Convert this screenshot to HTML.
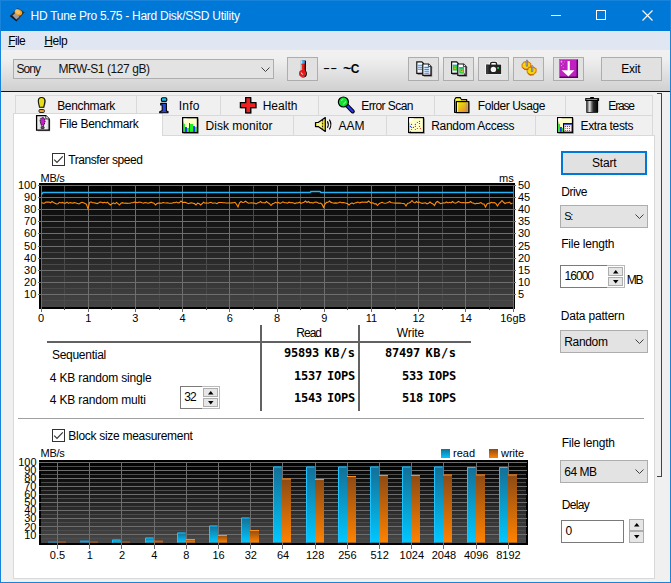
<!DOCTYPE html>
<html><head><meta charset="utf-8"><title>HD Tune Pro 5.75 - Hard Disk/SSD Utility</title>
<style>
*{box-sizing:border-box;margin:0;padding:0}
html,body{width:671px;height:583px;overflow:hidden;background:#f0f0f0}
body{position:relative;font-family:"Liberation Sans",sans-serif;font-size:12px;color:#000;line-height:1}
.a{position:absolute}
.t{position:absolute;white-space:nowrap;font-size:12px;line-height:14px;letter-spacing:-0.25px}
.ar{position:absolute;white-space:nowrap;font-size:11px;line-height:12px;font-family:"Liberation Sans",sans-serif}
.mono{position:absolute;white-space:nowrap;font-family:"DejaVu Sans Mono","Liberation Mono",monospace;font-weight:bold;font-size:12px;line-height:14px;letter-spacing:-0.22px}
.btn{position:absolute;background:#e1e1e1;border:1px solid #adadad}
.combo{position:absolute;background:#e3e3e3;border:1px solid #adadad}
.tab{position:absolute;border:1px solid #d9d9d9;background:#f0f0f0}
svg{position:absolute;overflow:visible}
</style></head>
<body>
<div class="a" style="left:0;top:0;width:671px;height:31px;background:#0078d7"></div>
<div class="a" style="left:0;top:0;width:1px;height:583px;background:#1883da"></div>
<div class="a" style="left:0;top:0;width:671px;height:1px;background:#1883da"></div>
<div class="a" style="left:670px;top:0;width:1px;height:583px;background:#1883da"></div>
<div class="a" style="left:0;top:582px;width:671px;height:1px;background:#1883da"></div>
<svg style="left:9px;top:7px" width="17" height="16" viewBox="0 0 17 16">
<path d="M8.400 1.200 L15.300 5.300 L7.500 14.300 L1 8.900Z" fill="#2c2a28" stroke="#1a3a5a" stroke-width="0.500"/>
<path d="M1 8.900 L7.500 14.300 L7.500 13 L1.600 8.200Z" fill="#111"/>
<path d="M3.500 8.600 L7.300 5.200 L10.500 9.800 L7.200 12.600Z" fill="#9c9ca8"/>
<ellipse cx="9.400" cy="5.400" rx="3.900" ry="2.900" fill="#f4a428" transform="rotate(28 9.400 5.400)"/>
<ellipse cx="8.800" cy="4.800" rx="2.600" ry="1.800" fill="#fbc060" transform="rotate(28 8.800 4.800)"/>
<path d="M8.600 3.400 L9.600 6.400 L8 6.600Z" fill="#c8c0e0"/>
</svg>
<div class="t" style="left:30.50px;top:9px;font-size:12px;line-height:14px;letter-spacing:-0.272px;color:#fff">HD Tune Pro 5.75 - Hard Disk/SSD Utility</div>
<div class="a" style="left:551px;top:15px;width:10px;height:1px;background:#fff"></div>
<div class="a" style="left:596px;top:10px;width:10px;height:10px;border:1px solid #fff"></div>
<svg style="left:642px;top:10px" width="11" height="11" viewBox="0 0 11 11"><path d="M0.5 0.5 L10.5 10.5 M10.5 0.5 L0.5 10.5" stroke="#fff" stroke-width="1.1" fill="none"/></svg>
<div class="a" style="left:1px;top:31px;width:669px;height:19px;background:#e0e7f3"></div>
<div class="t" style="left:8.30px;top:34px;font-size:12px;line-height:14px;letter-spacing:-0.650px"><u>F</u>ile</div>
<div class="t" style="left:44.30px;top:34px;font-size:12px;line-height:14px;letter-spacing:-0.400px"><u>H</u>elp</div>
<div class="a" style="left:1px;top:50px;width:669px;height:41px;background:linear-gradient(#f1f1f1 0%,#efefef 22%,#d0d0d0 100%)"></div>
<div class="a" style="left:1px;top:91px;width:669px;height:1px;background:#111"></div>
<div class="combo" style="left:13px;top:59px;width:261px;height:20px"></div>
<div class="t" style="left:16.50px;top:62px;font-size:12px;line-height:14px;letter-spacing:-0.917px;color:#111">Sony</div>
<div class="t" style="left:58.50px;top:62px;font-size:12px;line-height:14px;letter-spacing:-0.436px;color:#111">MRW-S1 (127 gB)</div>
<svg style="left:260.500px;top:67px" width="9" height="6" viewBox="0 0 9 6"><path d="M0.500 0.500 L4.500 4.500 L8.500 0.500" stroke="#404040" stroke-width="1" fill="none"/></svg>
<div class="btn" style="left:287px;top:57px;width:31px;height:24px"></div>
<svg style="left:296px;top:58px" width="14" height="21" viewBox="0 0 14 21">
<circle cx="7.2" cy="15.8" r="3.7" fill="#000"/>
<rect x="8" y="2.6" width="2" height="12" fill="#000"/>
<rect x="4.300" y="2.300" width="1" height="11" fill="#b8c8cc"/>
<circle cx="5.800" cy="15.400" r="3.700" fill="#c8e8f0"/>
<rect x="5" y="2.300" width="3.700" height="12" fill="#e81818"/>
<rect x="5" y="2.300" width="3.700" height="3.400" fill="#18b0ff"/>
<rect x="5" y="2.300" width="1.300" height="3.400" fill="#b0e8ff"/>
<rect x="5" y="6.500" width="1.100" height="6" fill="#f8a848"/>
<circle cx="6.400" cy="15.500" r="3.400" fill="#e81818"/>
<path d="M5.300 14.200 q0.300 1.600 2 1.800 l-0.300 0.800 q-2 -0.400 -2.300 -2.200z" fill="#fff"/>
</svg>
<div class="a" style="left:322.500px;top:61px;font:12px/14px 'Liberation Sans',sans-serif;white-space:nowrap;transform:scaleX(1.75);transform-origin:0 0;letter-spacing:0.2px">--</div>
<div class="a" style="left:342.500px;top:62px;font:bold 12px/14px 'Liberation Sans',sans-serif;white-space:nowrap;letter-spacing:1.200px"><span style="position:relative;top:0px;display:inline-block;transform:scaleX(1.2);transform-origin:0 50%">~</span>C</div>
<div class="btn" style="left:408px;top:57px;width:31px;height:24px"></div>
<div class="btn" style="left:443px;top:57px;width:31px;height:24px"></div>
<div class="btn" style="left:478px;top:57px;width:31px;height:24px"></div>
<div class="btn" style="left:513px;top:57px;width:31px;height:24px"></div>
<div class="btn" style="left:553px;top:57px;width:31px;height:24px"></div>
<div class="btn" style="left:601px;top:57px;width:61px;height:24px"></div>
<div class="t" style="left:621.30px;top:62px;font-size:12px;line-height:14px;letter-spacing:-0.233px">Exit</div>
<svg style="left:415px;top:60px" width="19" height="18" viewBox="0 0 19 18"><defs><linearGradient id="pg" x1="0" y1="0" x2="1" y2="1"><stop offset="0.45" stop-color="#fff"/><stop offset="1" stop-color="#d8c0d8"/></linearGradient></defs>
<path d="M2.600 2.600 h5.500 l2 2 v10.400 h-7.500z" fill="#666" opacity="0.700"/>
<path d="M1.800 1.800 h5 l1.600 1.600 v10 h-6.600z" fill="url(#pg)" stroke="#111" stroke-width="1.200"/>
<path d="M3 5.300h4M3 7.300h4M3 9.200h4" stroke="#1e90ff" stroke-width="1.100"/>
<path d="M8.800 4.800 h6 l2.400 2.400 v9.600 h-8.400z" fill="#555" opacity="0.700"/>
<path d="M7.800 4 h5.800 l2.400 2.400 v9 h-8.200z" fill="url(#pg)" stroke="#111" stroke-width="1.200"/>
<path d="M13.400 4 v2.600 h2.600" fill="#fff" stroke="#111" stroke-width="0.800"/>
<path d="M9.300 7.400h4.600M9.300 9.400h4.600M9.300 11.300h4.600M9.300 13.200h4.600" stroke="#1e90ff" stroke-width="1.100"/>
</svg>
<svg style="left:450px;top:60px" width="19" height="18" viewBox="0 0 19 18">
<path d="M2.400 2.600 h5.500 l2 2 v10.400 h-7.500z" fill="#666" opacity="0.700"/>
<path d="M1.600 1.800 h5 l1.600 1.600 v10 h-6.600z" fill="url(#pg)" stroke="#111" stroke-width="1.200"/>
<rect x="2.800" y="5" width="4.200" height="5.600" fill="#20d040"/>
<rect x="2.800" y="4.600" width="4.200" height="1.200" fill="#20a0f0"/>
<rect x="4.200" y="6.600" width="1.800" height="2.400" fill="#e8d020"/>
<rect x="4.600" y="7" width="1" height="1.300" fill="#f03020"/>
<path d="M8.800 4.800 h6 l2.400 2.400 v9.600 h-8.400z" fill="#555" opacity="0.700"/>
<path d="M7.800 4 h5.800 l2.400 2.400 v9 h-8.200z" fill="url(#pg)" stroke="#111" stroke-width="1.200"/>
<path d="M13.400 4 v2.600 h2.600" fill="#fff" stroke="#111" stroke-width="0.800"/>
<rect x="9.200" y="7.400" width="4.800" height="6.200" fill="#20d040"/>
<rect x="9.200" y="7" width="4.800" height="1.300" fill="#20a0f0"/>
<rect x="10.600" y="9.200" width="2.200" height="3" fill="#e8d020"/>
<rect x="11.200" y="9.600" width="1.100" height="1.600" fill="#f03020"/>
<rect x="14" y="13.600" width="1" height="1" fill="#000"/>
</svg>
<svg style="left:485px;top:60px" width="18" height="16" viewBox="0 0 18 16">
<path d="M1.200 4.600 H5 V3.600 Q5.200 1.700 7 1.700 H10.200 Q12 1.700 12.200 3.600 V4.600 H16.200 V14.100 H1.200Z" fill="#fff" stroke="#fff" stroke-width="1.600" stroke-linejoin="round"/>
<path d="M1.200 4.600 H16.200 V14.100 H1.200Z" fill="#222"/>
<path d="M5.600 5 V3.800 Q5.700 2.500 7 2.400 H10.200 Q11.500 2.500 11.600 3.800 V5" fill="none" stroke="#222" stroke-width="1.400"/>
<rect x="1.200" y="4.600" width="2.400" height="9.500" fill="#3a3a3a"/>
<circle cx="8.400" cy="9.400" r="2.700" fill="#f4f4f4"/>
<rect x="12.200" y="7.100" width="1.800" height="1.700" fill="#20e040"/>
</svg>
<svg style="left:520px;top:59px" width="19" height="19" viewBox="0 0 19 19">
<path d="M2 5.500 L4 3 L8 2.600 L10.800 4.600 L10.600 7.600 L8.400 9.800 L4.600 10 L2.200 8.200Z" fill="#f4d808" stroke="#e07800" stroke-width="1.100" stroke-linejoin="round"/>
<path d="M7 10.800 L9 8.400 L13.200 8 L16.200 10 L16 13 L13.800 15.200 L10 15.600 L7.400 13.800Z" fill="#f4d808" stroke="#e07800" stroke-width="1.100" stroke-linejoin="round"/>
<path d="M6.200 2 L7 0.800 L7.600 2 V7.200 H6.200Z" fill="#c8c0d8" stroke="#5a5070" stroke-width="0.600"/>
<path d="M11.400 7.400 L12.100 6.200 L12.800 7.400 V12.600 H11.400Z" fill="#c8c0d8" stroke="#5a5070" stroke-width="0.600"/>
<path d="M3 9 L4.600 10.600 L8.400 10.400 M8 14.600 L10 16.200 L13.800 15.800" stroke="#b06000" stroke-width="0.900" fill="none"/>
</svg>
<svg style="left:558px;top:58px" width="21" height="21" viewBox="0 0 21 21">
<rect x="1" y="1" width="19" height="19" fill="#c020c0"/>
<path d="M19.300 1.800 V19.300 H1.800" stroke="#5a0060" stroke-width="1.500" fill="none"/>
<path d="M1.500 19.500 V1.500 H19.500" stroke="#d860d8" stroke-width="0.800" fill="none"/>
<path d="M2.500 3 l1.500 -0.500 l0.500 1.500 l-1.500 1 z M4.500 5.500 h1 v1 h-1z M3 7 h1 v1 h-1z M6 3.500 h0.800 v0.800 h-0.800z M4.800 9.300 h0.800 v0.800 h-0.800z M11.300 3.600 h0.700 v0.700 h-0.700z" fill="#c8b8c8"/>
<path d="M9.600 3 H11.800 V12.300 H16.500 L10.400 18.400 L3.600 12.300 H9.600Z" fill="#fff"/>
</svg>
<div class="a" style="left:657px;top:93px;width:5px;height:1px;background:#444"></div>
<div class="a" style="left:661px;top:93px;width:1px;height:384px;background:#444"></div>
<div class="a" style="left:657px;top:476px;width:5px;height:1px;background:#444"></div>
<div class="tab" style="left:15px;top:95px;width:122px;height:21px"></div>
<div class="t" style="left:57.20px;top:99px;font-size:12px;line-height:14px;letter-spacing:-0.319px">Benchmark</div>
<div class="tab" style="left:136px;top:95px;width:85px;height:21px"></div>
<div class="t" style="left:178.70px;top:99px;font-size:12px;line-height:14px;letter-spacing:0.267px">Info</div>
<div class="tab" style="left:220px;top:95px;width:99px;height:21px"></div>
<div class="t" style="left:262.70px;top:99px;font-size:12px;line-height:14px;letter-spacing:0.020px">Health</div>
<div class="tab" style="left:318px;top:95px;width:117px;height:21px"></div>
<div class="t" style="left:361.20px;top:99px;font-size:12px;line-height:14px;letter-spacing:-0.561px">Error Scan</div>
<div class="tab" style="left:434px;top:95px;width:132px;height:21px"></div>
<div class="t" style="left:477.70px;top:99px;font-size:12px;line-height:14px;letter-spacing:-0.386px">Folder Usage</div>
<div class="tab" style="left:565px;top:95px;width:88px;height:21px"></div>
<div class="t" style="left:608.30px;top:99px;font-size:12px;line-height:14px;letter-spacing:-1.163px">Erase</div>
<div class="tab" style="left:162px;top:115px;width:132px;height:21px"></div>
<div class="t" style="left:205.50px;top:119px;font-size:12px;line-height:14px;letter-spacing:0.027px">Disk monitor</div>
<div class="tab" style="left:293px;top:115px;width:94px;height:21px"></div>
<div class="t" style="left:338.50px;top:119px;font-size:12px;line-height:14px;letter-spacing:0.000px">AAM</div>
<div class="tab" style="left:386px;top:115px;width:150px;height:21px"></div>
<div class="t" style="left:431.20px;top:119px;font-size:12px;line-height:14px;letter-spacing:-0.283px">Random Access</div>
<div class="tab" style="left:535px;top:115px;width:118px;height:21px"></div>
<div class="t" style="left:580.50px;top:119px;font-size:12px;line-height:14px;letter-spacing:-0.370px">Extra tests</div>
<div class="a" style="left:13px;top:135px;width:642px;height:444px;background:#fff;border:1px solid #d9d9d9"></div>
<div class="a" style="left:13px;top:113px;width:150px;height:23px;background:#fff;border:1px solid #d9d9d9;border-bottom:none"></div>
<div class="t" style="left:59.30px;top:117px;font-size:12px;line-height:14px;letter-spacing:-0.300px">File Benchmark</div>

<svg style="left:34px;top:96px" width="16" height="18" viewBox="0 0 16 18">
<path d="M8.4 2 C11.6 2 12 4 12 5.6 C12 7.6 10.6 10 10.3 11.8 H6.5 C6.2 10 4.8 7.6 4.8 5.6 C4.8 4 5.2 2 8.4 2Z" fill="#444" opacity="0.5"/>
<path d="M7.600 1.500 C10.300 1.500 10.900 3.300 10.900 5.100 C10.900 7.100 9.900 9.500 9.700 11.300 H5.500 C5.300 9.500 4.300 7.100 4.300 5.100 C4.300 3.300 4.900 1.500 7.600 1.500Z" fill="#e6de12" stroke="#111" stroke-width="1.100"/>
<rect x="5" y="13.5" width="5.4" height="3" rx="1" fill="#f0a030" stroke="#111" stroke-width="0.9"/>
</svg>
<svg style="left:35px;top:114px" width="18" height="19" viewBox="0 0 18 19">
<defs><linearGradient id="fpg" x1="0" y1="0" x2="1" y2="0"><stop offset="0" stop-color="#fff"/><stop offset="0.300" stop-color="#dcdcdc"/><stop offset="0.700" stop-color="#f4f4f4"/><stop offset="1" stop-color="#d0d0d0"/></linearGradient></defs>
<path d="M2.600 2.600 H11.500 L15.200 6 V17.300 H2.600Z" fill="#555" opacity="0.550"/>
<path d="M1.600 1.600 H10.800 L14.200 4.900 V16.200 H1.600Z" fill="url(#fpg)" stroke="#000" stroke-width="1.300"/>
<path d="M10.800 1.600 V4.900 H14.200" fill="#fff" stroke="#000" stroke-width="0.800"/>
<path d="M7.600 3.700 C9.600 3.700 10.100 5.300 10.100 6.700 C10.100 8.300 9.300 9.700 9 11.200 H6.300 C6 9.700 5.200 8.300 5.200 6.700 C5.200 5.300 5.600 3.700 7.600 3.700Z" fill="#c81cd0" stroke="#111" stroke-width="1" stroke-dasharray="1.500 0.700"/>
<rect x="6.200" y="12.600" width="2.900" height="2" rx="0.500" fill="#c81cd0" stroke="#111" stroke-width="0.800"/>
</svg>
<svg style="left:159px;top:96px" width="12" height="18" viewBox="0 0 12 18">
<rect x="2.400" y="1.800" width="5.400" height="3.600" rx="1.200" fill="#00c4f4" stroke="#000" stroke-width="1.100"/>
<path d="M1.700 7.400 H7.400 V14.900 L9 15.600 V16.700 H0.700 V15.700 L3.200 14.600 V9 H1.700Z" fill="#2848e0" stroke="#000" stroke-width="1.100" stroke-linejoin="round"/>
</svg>
<svg style="left:182px;top:117px" width="18" height="18" viewBox="0 0 18 18">
<rect x="1.500" y="1.500" width="15.300" height="15.300" fill="#555" opacity="0.550"/>
<rect x="0.600" y="0.600" width="14.900" height="14.900" fill="#ffffc8" stroke="#000" stroke-width="1.200"/>
<path d="M1.200 1.200 H5.500 L1.200 5.500Z" fill="#fff"/>
<rect x="1.200" y="6.800" width="1.700" height="8.100" fill="#20f020"/><rect x="2.900" y="10.100" width="2.100" height="4.800" fill="#2030ff"/><rect x="5.000" y="11.000" width="2.000" height="3.900" fill="#20f020"/><rect x="7.000" y="6.000" width="1.000" height="8.900" fill="#2030ff"/><rect x="8.000" y="7.000" width="3.100" height="7.900" fill="#20f020"/><rect x="11.100" y="9.100" width="1.900" height="5.800" fill="#2030ff"/><rect x="13.000" y="9.900" width="1.900" height="5.000" fill="#20f020"/>
<rect x="0.600" y="0.600" width="14.900" height="14.900" fill="none" stroke="#000" stroke-width="1.200"/>
</svg>
<svg style="left:239px;top:96px" width="19" height="19" viewBox="0 0 19 19">
<path d="M7.500 2.500 H12.500 V7.500 H17.800 V12.500 H12.500 V17.800 H7.500 V12.500 H2.200 V7.500 H7.500Z" fill="#444" opacity="0.5"/>
<path d="M6.700 1.700 H11.700 V6.700 H16.900 V11.700 H11.700 V16.800 H6.700 V11.700 H1.400 V6.700 H6.700Z" fill="#f02020" stroke="#000" stroke-width="1.300"/>
</svg>
<svg style="left:336px;top:95px" width="20" height="20" viewBox="0 0 20 20">
<path d="M11 10.500 L16.800 16.500" stroke="#000" stroke-width="4" stroke-linecap="round"/>
<path d="M11 10.500 L16.600 16.300" stroke="#2838e8" stroke-width="2.200" stroke-linecap="round"/>
<circle cx="7.400" cy="7" r="5" fill="#10e030" stroke="#000" stroke-width="1.200"/>
<path d="M5.200 6 L7 4.200 M7.200 9.300 L10 6.500" stroke="#d8ffd8" stroke-width="0.800"/>
</svg>
<svg style="left:314px;top:116px" width="19" height="17" viewBox="0 0 19 17">
<path d="M1.500 6.500 H4.200 L11.300 1.600 V15.400 L4.200 10.600 H1.500Z" fill="#f0e020" stroke="#000" stroke-width="1.200" stroke-linejoin="round"/>
<path d="M3 7.300 H4.600 L7.500 5.500 V11.500 L4.600 9.800 H3Z" fill="#faf6a0"/>
<path d="M8.600 3.800 V13.200" stroke="#000" stroke-width="0.900" stroke-dasharray="1.600 1.300"/>
<path d="M13.400 5.200 Q15.200 8.500 13.400 11.800 M15.400 3.600 Q18.400 8.500 15.400 13.400" stroke="#000" stroke-width="1.100" fill="none"/>
</svg>
<svg style="left:453px;top:96px" width="18" height="18" viewBox="0 0 18 18">
<defs><linearGradient id="fg" x1="0" y1="0" x2="1" y2="1"><stop offset="0.150" stop-color="#ece400"/><stop offset="0.800" stop-color="#e89030"/></linearGradient></defs>
<path d="M4.400 6.700 H16.800 V17.300 H4.400Z" fill="#555" opacity="0.450"/>
<path d="M1.600 3.800 L3 1.600 H7.200 L8.400 3.700 H13.700 V6 H3.400 V16.300 H1.600Z" fill="#f2ea28" stroke="#000" stroke-width="1.200" stroke-linejoin="round"/>
<path d="M2.600 3.400 H7.600" stroke="#fbf8a0" stroke-width="1"/>
<rect x="3.500" y="5.600" width="12.300" height="11" fill="url(#fg)" stroke="#000" stroke-width="1.200"/>
<path d="M4.600 6.400 V15.900" stroke="#fffbe0" stroke-width="0.900"/>
<path d="M13.300 6.300 V16" stroke="#a09484" stroke-width="0.700"/>
</svg>
<svg style="left:408px;top:117px" width="18" height="18" viewBox="0 0 18 18">
<rect x="1.500" y="1.500" width="15.300" height="15.300" fill="#555" opacity="0.550"/>
<rect x="0.600" y="0.600" width="14.900" height="14.900" fill="#ffffc8" stroke="#000" stroke-width="1.200"/>
<path d="M1.200 1.200 H6 L1.200 6Z" fill="#fff"/>
<circle cx="11.500" cy="4.400" r="0.620" fill="#2040ff"/><circle cx="9.400" cy="5.500" r="0.620" fill="#2040ff"/><circle cx="11.500" cy="6.500" r="0.620" fill="#2040ff"/><circle cx="3.500" cy="7.400" r="0.620" fill="#2040ff"/><circle cx="7.400" cy="7.400" r="0.620" fill="#2040ff"/><circle cx="2.500" cy="9.400" r="0.620" fill="#2040ff"/><circle cx="5.400" cy="10.400" r="0.620" fill="#2040ff"/><circle cx="7.400" cy="9.400" r="0.620" fill="#f02020"/><circle cx="11.500" cy="9.400" r="0.620" fill="#f02020"/><circle cx="3.500" cy="10.400" r="0.620" fill="#f02020"/><circle cx="9.400" cy="11.500" r="0.620" fill="#f02020"/><circle cx="12.400" cy="11.500" r="0.620" fill="#f02020"/><circle cx="3.500" cy="12.500" r="0.620" fill="#f02020"/><circle cx="7.400" cy="12.500" r="0.620" fill="#f02020"/><circle cx="2.500" cy="14.500" r="0.620" fill="#f02020"/>
</svg>
<svg style="left:584px;top:96px" width="17" height="18" viewBox="0 0 17 18">
<defs><linearGradient id="tg" x1="0" y1="0" x2="1" y2="0"><stop offset="0" stop-color="#555"/><stop offset="0.270" stop-color="#e4e4e4"/><stop offset="0.400" stop-color="#8a8a8a"/><stop offset="0.620" stop-color="#2a2a2a"/><stop offset="1" stop-color="#0a0a0a"/></linearGradient></defs>
<rect x="6.200" y="1" width="3.700" height="1.800" fill="#000"/>
<rect x="1.200" y="2.100" width="13.900" height="2.900" fill="#000"/>
<rect x="2.300" y="3" width="11" height="0.900" fill="#9a9a9a"/>
<rect x="2.300" y="4.600" width="11.700" height="12.200" fill="#000"/>
<rect x="3.100" y="5" width="10" height="11" fill="url(#tg)"/>
<rect x="14.300" y="5" width="0.800" height="11" fill="#777" opacity="0.500"/>
</svg>
<svg style="left:557px;top:117px" width="18" height="18" viewBox="0 0 18 18">
<rect x="1.500" y="1.500" width="15.300" height="15.300" fill="#555" opacity="0.550"/>
<rect x="0.600" y="0.600" width="14.900" height="14.900" fill="#ffffc8" stroke="#000" stroke-width="1.200"/>
<path d="M1.200 1.200 H5 L1.200 5Z" fill="#fff"/>
<rect x="1.200" y="6.800" width="1.800" height="8.100" fill="#20e820"/>
<rect x="3" y="10" width="1.900" height="4.900" fill="#2030f0"/>
<rect x="4.900" y="11" width="1.300" height="3.900" fill="#20e820"/>
<rect x="6.600" y="6.700" width="8.600" height="8.500" fill="#fff6f6" stroke="#000" stroke-width="1.200"/>
<rect x="7.200" y="7.200" width="7.500" height="0.900" fill="#2838d8"/>
<circle cx="8.400" cy="9.400" r="0.620" fill="#f02020"/><circle cx="10.400" cy="9.400" r="0.620" fill="#2040ff"/><circle cx="12.500" cy="9.400" r="0.620" fill="#f02020"/><circle cx="8.400" cy="11.500" r="0.620" fill="#20d020"/><circle cx="10.400" cy="11.500" r="0.620" fill="#f02020"/><circle cx="12.500" cy="11.500" r="0.620" fill="#f02020"/><circle cx="8.400" cy="13.500" r="0.620" fill="#f02020"/><circle cx="10.400" cy="13.500" r="0.620" fill="#f02020"/><circle cx="12.500" cy="13.500" r="0.620" fill="#2040ff"/>
</svg>

<div class="a" style="left:52px;top:153px;width:13px;height:13px;border:1px solid #333;background:#fff"></div>
<svg style="left:52px;top:153px" width="13" height="13" viewBox="0 0 13 13"><path d="M2.2 6.6 L5 9.4 L10.8 3.4" stroke="#333" stroke-width="1.15" fill="none"/></svg>
<div class="t" style="left:68.30px;top:153px;font-size:12px;line-height:14px;letter-spacing:-0.442px">Transfer speed</div>
<div class="a" style="left:52px;top:429px;width:13px;height:13px;border:1px solid #333;background:#fff"></div>
<svg style="left:52px;top:429px" width="13" height="13" viewBox="0 0 13 13"><path d="M2.2 6.6 L5 9.4 L10.8 3.4" stroke="#333" stroke-width="1.15" fill="none"/></svg>
<div class="t" style="left:68.30px;top:429px;font-size:12px;line-height:14px;letter-spacing:-0.290px">Block size measurement</div>
<svg style="left:0;top:0" width="671" height="583" viewBox="0 0 671 583">
<defs><linearGradient id="g1" x1="0" y1="0" x2="0" y2="1"><stop offset="0" stop-color="#000"/><stop offset="1" stop-color="#444"/></linearGradient><linearGradient id="g2" x1="0" y1="0" x2="0" y2="1"><stop offset="0" stop-color="#000"/><stop offset="1" stop-color="#484848"/></linearGradient><linearGradient id="gr" x1="0" y1="0" x2="0" y2="1"><stop offset="0" stop-color="#146e96"/><stop offset="1" stop-color="#00c8ff"/></linearGradient><linearGradient id="gw" x1="0" y1="0" x2="0" y2="1"><stop offset="0" stop-color="#8c4a14"/><stop offset="1" stop-color="#ff8200"/></linearGradient></defs>
<rect x="39" y="183" width="476" height="126" fill="#000"/>
<rect x="41" y="185" width="473" height="122" fill="url(#g1)"/>
<path d="M41 215.5H514M41 227.5H514M41 239.5H514M41 252.5H514M41 264.5H514M41 276.5H514M41 288.5H514M41 300.5H514M64.5 185V310M111.5 185V310M159.5 185V310M206.5 185V310M253.5 185V310M300.5 185V310M347.5 185V310M395.5 185V310M442.5 185V310M489.5 185V310" stroke="#4a4a4a" stroke-width="1" fill="none" shape-rendering="crispEdges"/>
<path d="M38 185.5H516M38 197.5H516M38 209.5H516M38 221.5H516M38 233.5H516M38 246.5H516M38 258.5H516M38 270.5H516M38 282.5H516M38 294.5H516M41.5 185V312M88.5 185V312M135.5 185V312M182.5 185V312M229.5 185V312M277.5 185V312M324.5 185V312M371.5 185V312M418.5 185V312M465.5 185V312M513.5 185V312" stroke="#6e6e6e" stroke-width="1" fill="none" shape-rendering="crispEdges"/>
<polyline fill="none" stroke="#22b4f6" stroke-width="1.5" points="41.5,194.5 43,192.5 310,192.5 311,191.6 320,191.6 321,192.5 513.5,192.5"/>
<polyline fill="none" stroke="#ff8c0a" stroke-width="1.1" stroke-linejoin="miter" points="41.5,202.6 43.0,203.3 44.5,203.1 46.0,202.1 47.5,202.1 49.0,202.1 50.5,202.8 52.0,201.5 53.5,202.5 55.0,203.2 56.5,204.0 58.0,203.7 59.5,202.3 61.0,202.9 62.5,202.4 64.0,203.3 65.5,203.1 67.0,202.1 68.5,203.4 70.0,202.6 71.5,202.9 73.0,203.1 74.5,202.5 76.0,203.0 77.5,203.5 79.0,204.0 80.5,203.0 82.0,202.3 83.5,202.8 85.0,203.5 86.5,204.3 88.0,208.8 89.5,202.6 91.0,201.8 92.5,202.7 94.0,202.8 95.5,203.1 97.0,203.6 98.5,202.9 100.0,202.0 101.5,202.3 103.0,202.8 104.5,202.3 106.0,202.9 107.5,202.2 109.0,203.8 110.5,205.0 112.0,203.7 113.5,202.9 115.0,203.9 116.5,202.4 118.0,203.7 119.5,205.0 121.0,203.2 122.5,202.7 124.0,203.2 125.5,203.0 127.0,203.4 128.5,203.2 130.0,203.2 131.5,202.8 133.0,202.8 134.5,202.1 136.0,202.4 137.5,202.7 139.0,202.0 140.5,202.2 142.0,202.8 143.5,203.2 145.0,202.5 146.5,202.7 148.0,203.2 149.5,202.9 151.0,202.2 152.5,202.7 154.0,203.2 155.5,205.0 157.0,203.6 158.5,203.1 160.0,203.0 161.5,203.2 163.0,202.5 164.5,202.8 166.0,203.0 167.5,202.7 169.0,203.2 170.5,203.2 172.0,203.2 173.5,202.5 175.0,202.7 176.5,202.1 178.0,202.9 179.5,202.7 181.0,201.0 182.5,202.5 184.0,202.4 185.5,202.4 187.0,203.1 188.5,203.7 190.0,203.1 191.5,202.8 193.0,203.2 194.5,203.6 196.0,205.0 197.5,203.2 199.0,203.4 200.5,205.0 202.0,203.8 203.5,202.3 205.0,203.2 206.5,202.8 208.0,203.2 209.5,202.7 211.0,202.3 212.5,203.2 214.0,203.0 215.5,203.0 217.0,203.7 218.5,202.5 220.0,202.5 221.5,202.5 223.0,202.8 224.5,202.7 226.0,203.0 227.5,203.0 229.0,203.0 230.5,203.0 232.0,202.9 233.5,202.8 235.0,202.3 236.5,204.2 238.0,207.0 239.5,202.9 241.0,201.5 242.5,202.5 244.0,202.3 245.5,201.2 247.0,202.3 248.5,203.2 250.0,203.0 251.5,202.9 253.0,203.0 254.5,203.1 256.0,203.9 257.5,203.0 259.0,202.6 260.5,201.5 262.0,202.7 263.5,202.8 265.0,202.9 266.5,201.5 268.0,202.8 269.5,203.7 271.0,205.5 272.5,203.8 274.0,203.2 275.5,202.3 277.0,203.0 278.5,202.4 280.0,203.4 281.5,202.7 283.0,201.8 284.5,202.7 286.0,202.8 287.5,203.1 289.0,202.2 290.5,202.8 292.0,202.5 293.5,203.0 295.0,203.6 296.5,202.8 298.0,203.0 299.5,202.2 301.0,203.4 302.5,202.8 304.0,202.2 305.5,201.0 307.0,202.5 308.5,201.5 310.0,202.9 311.5,202.5 313.0,203.1 314.5,202.2 316.0,202.1 317.5,202.6 319.0,203.5 320.5,203.0 322.0,204.2 323.5,207.5 325.0,204.0 326.5,202.4 328.0,202.3 329.5,201.0 331.0,202.4 332.5,202.8 334.0,203.1 335.5,202.9 337.0,203.1 338.5,202.8 340.0,202.1 341.5,202.8 343.0,202.5 344.5,202.8 346.0,203.2 347.5,203.6 349.0,205.0 350.5,203.6 352.0,202.9 353.5,203.9 355.0,202.9 356.5,202.6 358.0,202.0 359.5,202.9 361.0,202.4 362.5,202.0 364.0,202.2 365.5,202.1 367.0,202.3 368.5,201.0 370.0,202.2 371.5,203.1 373.0,202.8 374.5,204.0 376.0,203.6 377.5,205.5 379.0,203.7 380.5,203.1 382.0,202.3 383.5,203.0 385.0,203.2 386.5,203.0 388.0,202.6 389.5,201.5 391.0,202.5 392.5,202.8 394.0,203.0 395.5,203.1 397.0,203.0 398.5,203.1 400.0,203.0 401.5,203.3 403.0,203.5 404.5,203.8 406.0,206.0 407.5,203.5 409.0,203.0 410.5,202.3 412.0,200.5 413.5,202.4 415.0,202.9 416.5,201.5 418.0,202.7 419.5,202.1 421.0,203.1 422.5,203.4 424.0,203.0 425.5,202.9 427.0,203.8 428.5,203.2 430.0,202.0 431.5,203.2 433.0,203.9 434.5,205.5 436.0,202.5 437.5,201.5 439.0,202.5 440.5,203.6 442.0,203.2 443.5,202.9 445.0,203.0 446.5,202.0 448.0,202.9 449.5,202.3 451.0,202.9 452.5,201.5 454.0,202.7 455.5,203.2 457.0,202.5 458.5,201.5 460.0,202.3 461.5,202.7 463.0,202.6 464.5,202.8 466.0,202.9 467.5,202.5 469.0,202.6 470.5,201.5 472.0,202.7 473.5,203.1 475.0,203.9 476.5,203.4 478.0,203.5 479.5,203.1 481.0,202.6 482.5,203.9 484.0,204.0 485.5,207.0 487.0,203.9 488.5,203.3 490.0,203.1 491.5,202.3 493.0,202.9 494.5,202.5 496.0,203.6 497.5,206.0 499.0,203.5 500.5,202.3 502.0,200.5 503.5,202.3 505.0,203.5 506.5,202.8 508.0,202.8 509.5,202.1 511.0,203.9 512.5,203.0"/>
<rect x="39" y="460" width="489" height="85" fill="#000"/>
<rect x="41" y="462" width="485" height="81" fill="url(#g2)"/>
<path d="M41 466.5H526M41 474.5H526M41 482.5H526M41 490.5H526M41 498.5H526M41 506.5H526M41 514.5H526M41 522.5H526M41 530.5H526M41 538.5H526" stroke="#4c4c4c" stroke-width="1" fill="none" shape-rendering="crispEdges"/>
<path d="M39 462.5H527M39 470.5H527M39 478.5H527M39 486.5H527M39 494.5H527M39 502.5H527M39 510.5H527M39 518.5H527M39 526.5H527M39 534.5H527M57.5 462V549M89.5 462V549M121.5 462V549M154.5 462V549M186.5 462V549M218.5 462V549M250.5 462V549M282.5 462V549M315.5 462V549M347.5 462V549M379.5 462V549M411.5 462V549M443.5 462V549M476.5 462V549M508.5 462V549" stroke="#6e6e6e" stroke-width="1" fill="none" shape-rendering="crispEdges"/>
<rect x="48" y="541.5" width="9" height="1" fill="#1c9edc"/>
<rect x="57" y="541.5" width="9" height="1" fill="#c4620e"/>
<rect x="80" y="540.5" width="9" height="2" fill="#1c9edc"/>
<rect x="89" y="541.5" width="9" height="1" fill="#c4620e"/>
<rect x="112" y="539.5" width="9" height="3" fill="url(#gr)"/>
<path d="M112.5 542.5V540H120.5" stroke="#19c4ff" stroke-width="1" fill="none"/>
<rect x="121" y="541.5" width="9" height="1" fill="#c4620e"/>
<rect x="145" y="537.5" width="9" height="5" fill="url(#gr)"/>
<path d="M145.5 542.5V538H153.5" stroke="#19c4ff" stroke-width="1" fill="none"/>
<rect x="154" y="540.5" width="9" height="2" fill="#c4620e"/>
<rect x="177" y="532.5" width="9" height="10" fill="url(#gr)"/>
<path d="M177.5 542.5V533H185.5" stroke="#19c4ff" stroke-width="1" fill="none"/>
<rect x="186" y="539.0" width="9" height="3.5" fill="url(#gw)"/>
<path d="M186 539.5H195" stroke="#ff8c1a" stroke-width="1" fill="none"/>
<rect x="209" y="525.5" width="9" height="17" fill="url(#gr)"/>
<path d="M209.5 542.5V526H217.5" stroke="#19c4ff" stroke-width="1" fill="none"/>
<rect x="218" y="535.0" width="9" height="7.5" fill="url(#gw)"/>
<path d="M218 535.5H227" stroke="#ff8c1a" stroke-width="1" fill="none"/>
<rect x="241" y="517.5" width="9" height="25" fill="url(#gr)"/>
<path d="M241.5 542.5V518H249.5" stroke="#19c4ff" stroke-width="1" fill="none"/>
<rect x="250" y="530.0" width="9" height="12.5" fill="url(#gw)"/>
<path d="M250 530.5H259" stroke="#ff8c1a" stroke-width="1" fill="none"/>
<rect x="273" y="466.5" width="9" height="76" fill="url(#gr)"/>
<path d="M273.5 542.5V467H281.5" stroke="#19c4ff" stroke-width="1" fill="none"/>
<rect x="282" y="478.5" width="9" height="64" fill="url(#gw)"/>
<path d="M282 479H291" stroke="#ff8c1a" stroke-width="1" fill="none"/>
<rect x="306" y="466.5" width="9" height="76" fill="url(#gr)"/>
<path d="M306.5 542.5V467H314.5" stroke="#19c4ff" stroke-width="1" fill="none"/>
<rect x="315" y="479.0" width="9" height="63.5" fill="url(#gw)"/>
<path d="M315 479.5H324" stroke="#ff8c1a" stroke-width="1" fill="none"/>
<rect x="338" y="466.5" width="9" height="76" fill="url(#gr)"/>
<path d="M338.5 542.5V467H346.5" stroke="#19c4ff" stroke-width="1" fill="none"/>
<rect x="347" y="476.0" width="9" height="66.5" fill="url(#gw)"/>
<path d="M347 476.5H356" stroke="#ff8c1a" stroke-width="1" fill="none"/>
<rect x="370" y="466.5" width="9" height="76" fill="url(#gr)"/>
<path d="M370.5 542.5V467H378.5" stroke="#19c4ff" stroke-width="1" fill="none"/>
<rect x="379" y="475.0" width="9" height="67.5" fill="url(#gw)"/>
<path d="M379 475.5H388" stroke="#ff8c1a" stroke-width="1" fill="none"/>
<rect x="402" y="466.5" width="9" height="76" fill="url(#gr)"/>
<path d="M402.5 542.5V467H410.5" stroke="#19c4ff" stroke-width="1" fill="none"/>
<rect x="411" y="475.0" width="9" height="67.5" fill="url(#gw)"/>
<path d="M411 475.5H420" stroke="#ff8c1a" stroke-width="1" fill="none"/>
<rect x="434" y="466.5" width="9" height="76" fill="url(#gr)"/>
<path d="M434.5 542.5V467H442.5" stroke="#19c4ff" stroke-width="1" fill="none"/>
<rect x="443" y="474.5" width="9" height="68" fill="url(#gw)"/>
<path d="M443 475H452" stroke="#ff8c1a" stroke-width="1" fill="none"/>
<rect x="467" y="467.0" width="9" height="75.5" fill="url(#gr)"/>
<path d="M467.5 542.5V467.5H475.5" stroke="#19c4ff" stroke-width="1" fill="none"/>
<rect x="476" y="474.5" width="9" height="68" fill="url(#gw)"/>
<path d="M476 475H485" stroke="#ff8c1a" stroke-width="1" fill="none"/>
<rect x="499" y="467.0" width="9" height="75.5" fill="url(#gr)"/>
<path d="M499.5 542.5V467.5H507.5" stroke="#19c4ff" stroke-width="1" fill="none"/>
<rect x="508" y="474.5" width="9" height="68" fill="url(#gw)"/>
<path d="M508 475H517" stroke="#ff8c1a" stroke-width="1" fill="none"/>
<rect x="441" y="449" width="9" height="9" fill="url(#gr)"/>
<rect x="489" y="449" width="9" height="9" fill="url(#gw)"/>
</svg>
<div class="ar" style="left:40.6px;top:172px;letter-spacing:-0.3px">MB/s</div>
<div class="ar" style="left:499px;top:172px">ms</div>
<div class="ar" style="left:9.3px;width:27px;text-align:right;top:179.0px">100</div>
<div class="ar" style="left:9.3px;width:27px;text-align:right;top:191.1px">90</div>
<div class="ar" style="left:9.3px;width:27px;text-align:right;top:203.2px">80</div>
<div class="ar" style="left:9.3px;width:27px;text-align:right;top:215.3px">70</div>
<div class="ar" style="left:9.3px;width:27px;text-align:right;top:227.4px">60</div>
<div class="ar" style="left:9.3px;width:27px;text-align:right;top:239.5px">50</div>
<div class="ar" style="left:9.3px;width:27px;text-align:right;top:251.6px">40</div>
<div class="ar" style="left:9.3px;width:27px;text-align:right;top:263.7px">30</div>
<div class="ar" style="left:9.3px;width:27px;text-align:right;top:275.8px">20</div>
<div class="ar" style="left:9.3px;width:27px;text-align:right;top:287.9px">10</div>
<div class="ar" style="left:518px;top:179.0px">50</div>
<div class="ar" style="left:518px;top:191.1px">45</div>
<div class="ar" style="left:518px;top:203.2px">40</div>
<div class="ar" style="left:518px;top:215.3px">35</div>
<div class="ar" style="left:518px;top:227.4px">30</div>
<div class="ar" style="left:518px;top:239.5px">25</div>
<div class="ar" style="left:518px;top:251.6px">20</div>
<div class="ar" style="left:518px;top:263.7px">15</div>
<div class="ar" style="left:518px;top:275.8px">10</div>
<div class="ar" style="left:518px;top:287.9px">5</div>
<div class="ar" style="left:21.0px;width:40px;text-align:center;top:312px">0</div>
<div class="ar" style="left:68.2px;width:40px;text-align:center;top:312px">1</div>
<div class="ar" style="left:115.4px;width:40px;text-align:center;top:312px">3</div>
<div class="ar" style="left:162.6px;width:40px;text-align:center;top:312px">4</div>
<div class="ar" style="left:209.8px;width:40px;text-align:center;top:312px">6</div>
<div class="ar" style="left:257.0px;width:40px;text-align:center;top:312px">8</div>
<div class="ar" style="left:304.2px;width:40px;text-align:center;top:312px">9</div>
<div class="ar" style="left:351.4px;width:40px;text-align:center;top:312px">11</div>
<div class="ar" style="left:398.6px;width:40px;text-align:center;top:312px">12</div>
<div class="ar" style="left:445.8px;width:40px;text-align:center;top:312px">14</div>
<div class="ar" style="left:493.0px;width:40px;text-align:center;top:312px">16gB</div>
<div class="ar" style="left:40.6px;top:447px;letter-spacing:-0.3px">MB/s</div>
<div class="ar" style="left:9.5px;width:27px;text-align:right;top:456.0px">100</div>
<div class="ar" style="left:9.5px;width:27px;text-align:right;top:464.1px">90</div>
<div class="ar" style="left:9.5px;width:27px;text-align:right;top:472.1px">80</div>
<div class="ar" style="left:9.5px;width:27px;text-align:right;top:480.2px">70</div>
<div class="ar" style="left:9.5px;width:27px;text-align:right;top:488.2px">60</div>
<div class="ar" style="left:9.5px;width:27px;text-align:right;top:496.3px">50</div>
<div class="ar" style="left:9.5px;width:27px;text-align:right;top:504.4px">40</div>
<div class="ar" style="left:9.5px;width:27px;text-align:right;top:512.4px">30</div>
<div class="ar" style="left:9.5px;width:27px;text-align:right;top:520.5px">20</div>
<div class="ar" style="left:9.5px;width:27px;text-align:right;top:528.5px">10</div>
<div class="ar" style="left:37.5px;width:40px;text-align:center;top:549px">0.5</div>
<div class="ar" style="left:69.8px;width:40px;text-align:center;top:549px">1</div>
<div class="ar" style="left:102.0px;width:40px;text-align:center;top:549px">2</div>
<div class="ar" style="left:134.2px;width:40px;text-align:center;top:549px">4</div>
<div class="ar" style="left:166.4px;width:40px;text-align:center;top:549px">8</div>
<div class="ar" style="left:198.6px;width:40px;text-align:center;top:549px">16</div>
<div class="ar" style="left:230.8px;width:40px;text-align:center;top:549px">32</div>
<div class="ar" style="left:263.0px;width:40px;text-align:center;top:549px">64</div>
<div class="ar" style="left:295.2px;width:40px;text-align:center;top:549px">128</div>
<div class="ar" style="left:327.4px;width:40px;text-align:center;top:549px">256</div>
<div class="ar" style="left:359.6px;width:40px;text-align:center;top:549px">512</div>
<div class="ar" style="left:391.8px;width:40px;text-align:center;top:549px">1024</div>
<div class="ar" style="left:424.0px;width:40px;text-align:center;top:549px">2048</div>
<div class="ar" style="left:456.2px;width:40px;text-align:center;top:549px">4096</div>
<div class="ar" style="left:488.4px;width:40px;text-align:center;top:549px">8192</div>
<div class="ar" style="left:453px;top:447px">read</div>
<div class="ar" style="left:501px;top:447px">write</div>
<div class="a" style="left:47px;top:341px;width:424px;height:2px;background:#626262"></div>
<div class="a" style="left:260px;top:325px;width:2px;height:86px;background:#626262"></div>
<div class="a" style="left:358px;top:325px;width:2px;height:86px;background:#626262"></div>
<div class="t" style="left:296.30px;top:326px;font-size:12px;line-height:14px;letter-spacing:-1.000px">Read</div>
<div class="t" style="left:396.70px;top:326px;font-size:12px;line-height:14px;letter-spacing:-0.075px">Write</div>
<div class="t" style="left:51.90px;top:348px;font-size:12px;line-height:14px;letter-spacing:-0.267px">Sequential</div>
<div class="t" style="left:49.80px;top:371px;font-size:12px;line-height:14px;letter-spacing:-0.162px">4 KB random single</div>
<div class="t" style="left:49.80px;top:393px;font-size:12px;line-height:14px;letter-spacing:-0.169px">4 KB random multi</div>
<div class="mono" style="left:255px;width:100px;text-align:right;top:346px;word-spacing:-1.5px">95893 <span style="letter-spacing:0.5px;margin-right:-0.5px">KB/s</span></div>
<div class="mono" style="left:356px;width:100px;text-align:right;top:346px;word-spacing:-1.5px">87497 <span style="letter-spacing:0.5px;margin-right:-0.5px">KB/s</span></div>
<div class="mono" style="left:255px;width:100px;text-align:right;top:369px;word-spacing:-2px">1537 IOPS</div>
<div class="mono" style="left:356px;width:100px;text-align:right;top:369px;word-spacing:-2px">533 IOPS</div>
<div class="mono" style="left:255px;width:100px;text-align:right;top:391px;word-spacing:-2px">1543 IOPS</div>
<div class="mono" style="left:356px;width:100px;text-align:right;top:391px;word-spacing:-2px">518 IOPS</div>
<div class="a" style="left:180px;top:386px;width:40px;height:23px;border:1px solid #b9b9b9;background:#fff"></div>
<div class="a" style="left:180px;top:386px;width:22px;height:23px;border:1px solid #7a7a7a;border-right:none;background:#fff"></div>
<div class="a" style="left:203px;top:388px;width:15px;height:9px;border:1px solid #adadad;background:#e6e6e6"></div>
<div class="a" style="left:203px;top:398px;width:15px;height:9px;border:1px solid #adadad;background:#e6e6e6"></div>
<svg style="left:207.75px;top:390.8px" width="5.5" height="3.5" viewBox="0 0 5.5 3.5"><path d="M0 3.5 L2.75 0 L5.5 3.5z" fill="#000"/></svg>
<svg style="left:207.75px;top:401px" width="5.5" height="3.5" viewBox="0 0 5.5 3.5"><path d="M0 0 L2.75 3.5 L5.5 0z" fill="#000"/></svg>
<div class="t" style="left:184.20px;top:390px;font-size:12px;line-height:14px;letter-spacing:-0.950px">32</div>
<div class="a" style="left:18px;top:418px;width:626px;height:1px;background:#a0a0a0"></div>
<div class="a" style="left:561px;top:151px;width:86px;height:24px;background:#e1e1e1;border:2px solid #0078d7"></div>
<div class="t" style="left:592.05px;top:156px;font-size:12px;line-height:14px;letter-spacing:-0.213px">Start</div>
<div class="t" style="left:561.30px;top:185px;font-size:12px;line-height:14px;letter-spacing:-0.500px">Drive</div>
<div class="combo" style="left:560px;top:205px;width:88px;height:23px"></div>
<div class="t" style="left:564.30px;top:210px;font-size:11px;line-height:13px;letter-spacing:-1.400px">S:</div>
<svg style="left:634.5px;top:214px" width="9" height="6" viewBox="0 0 9 6"><path d="M0.5 0.500 L4.500 4.500 L8.500 0.500" stroke="#404040" stroke-width="1" fill="none"/></svg>
<div class="t" style="left:561.20px;top:237px;font-size:12px;line-height:14px;letter-spacing:-0.205px">File length</div>
<div class="a" style="left:560px;top:265px;width:65px;height:23px;border:1px solid #b9b9b9;background:#fff"></div>
<div class="a" style="left:560px;top:265px;width:47px;height:23px;border:1px solid #7a7a7a;border-right:none;background:#fff"></div>
<div class="a" style="left:608px;top:267px;width:15px;height:9px;border:1px solid #adadad;background:#e6e6e6"></div>
<div class="a" style="left:608px;top:277px;width:15px;height:9px;border:1px solid #adadad;background:#e6e6e6"></div>
<svg style="left:612.75px;top:269.8px" width="5.5" height="3.5" viewBox="0 0 5.5 3.5"><path d="M0 3.5 L2.75 0 L5.5 3.5z" fill="#000"/></svg>
<svg style="left:612.75px;top:280px" width="5.5" height="3.5" viewBox="0 0 5.5 3.5"><path d="M0 0 L2.75 3.5 L5.5 0z" fill="#000"/></svg>
<div class="t" style="left:564.60px;top:269px;font-size:12px;line-height:14px;letter-spacing:-0.988px">16000</div>
<div class="t" style="left:626.70px;top:273px;font-size:12px;line-height:14px;letter-spacing:-1.200px">MB</div>
<div class="t" style="left:560.80px;top:309px;font-size:12px;line-height:14px;letter-spacing:-0.205px">Data pattern</div>
<div class="combo" style="left:560px;top:330px;width:88px;height:23px"></div>
<div class="t" style="left:564.30px;top:335px;font-size:12px;line-height:14px;letter-spacing:-0.350px">Random</div>
<svg style="left:634.5px;top:339px" width="9" height="6" viewBox="0 0 9 6"><path d="M0.5 0.500 L4.500 4.500 L8.500 0.500" stroke="#404040" stroke-width="1" fill="none"/></svg>
<div class="t" style="left:561.70px;top:436px;font-size:12px;line-height:14px;letter-spacing:-0.205px">File length</div>
<div class="combo" style="left:560px;top:460px;width:88px;height:23px"></div>
<div class="t" style="left:564.30px;top:465px;font-size:12px;line-height:14px;letter-spacing:-0.500px">64 MB</div>
<svg style="left:634.5px;top:469px" width="9" height="6" viewBox="0 0 9 6"><path d="M0.5 0.500 L4.500 4.500 L8.500 0.500" stroke="#404040" stroke-width="1" fill="none"/></svg>
<div class="t" style="left:561.70px;top:498px;font-size:12px;line-height:14px;letter-spacing:-0.625px">Delay</div>
<div class="a" style="left:561px;top:520px;width:63px;height:23px;border:1px solid #7a7a7a;background:#fff"></div>
<div class="t" style="left:565.40px;top:524px;font-size:12px;line-height:14px;letter-spacing:-0.100px">0</div>
<div class="a" style="left:629px;top:519px;width:15px;height:24px;border:1px solid #c4c4c4;background:#e6e6e6"></div>
<div class="a" style="left:629px;top:519px;width:15px;height:12px;border:1px solid #adadad;background:#e6e6e6"></div>
<div class="a" style="left:629px;top:531px;width:15px;height:12px;border:1px solid #adadad;background:#e6e6e6"></div>
<svg style="left:633.75px;top:523px" width="5.5" height="3.5" viewBox="0 0 5.5 3.5"><path d="M0 3.5 L2.75 0 L5.5 3.5z" fill="#000"/></svg>
<svg style="left:633.75px;top:535px" width="5.5" height="3.5" viewBox="0 0 5.5 3.5"><path d="M0 0 L2.75 3.5 L5.5 0z" fill="#000"/></svg>
</body></html>
